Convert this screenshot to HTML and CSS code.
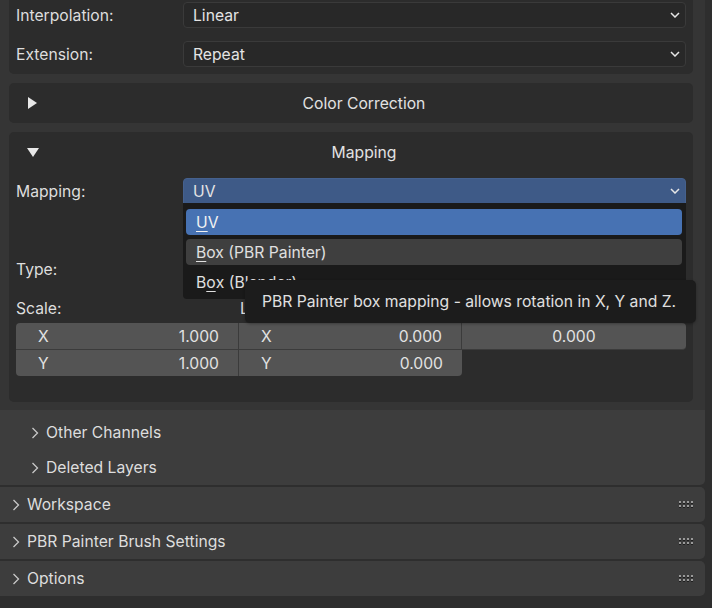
FILE: index.html
```html
<!DOCTYPE html>
<html>
<head>
<meta charset="utf-8">
<link rel="stylesheet" href="styles.css">
</head>
<body>
<div class="main">
  <div class="boxes">
    <section class="box box-top">
      <div class="prop">
        <span class="label">Interpolation:</span>
        <div class="select"><span>Linear</span><svg class="chev" width="10" height="6" viewBox="0 0 10 6"><polyline points="1,1 5,5 9,1" fill="none" stroke="#e6e6e6" stroke-width="1.5"/></svg></div>
      </div>
      <div class="prop">
        <span class="label">Extension:</span>
        <div class="select"><span>Repeat</span><svg class="chev" width="10" height="6" viewBox="0 0 10 6"><polyline points="1,1 5,5 9,1" fill="none" stroke="#e6e6e6" stroke-width="1.5"/></svg></div>
      </div>
    </section>

    <section class="box">
      <div class="box-head">
        <svg class="tri" width="12" height="12" viewBox="0 0 12 12"><polygon points="1,0 10,6 1,12" fill="#e8e8e8"/></svg>
        <span class="head-title">Color Correction</span>
      </div>
    </section>

    <section class="box mapping">
      <div class="box-head">
        <svg class="tri" width="12" height="12" viewBox="0 0 12 12"><polygon points="0,2 12,2 6,11" fill="#e8e8e8"/></svg>
        <span class="head-title">Mapping</span>
      </div>
      <div class="rows">
        <div class="prop">
          <span class="label">Mapping:</span>
          <div class="select active"><span>UV</span><svg class="chev" width="10" height="6" viewBox="0 0 10 6"><polyline points="1,1 5,5 9,1" fill="none" stroke="#e6e6e6" stroke-width="1.5"/></svg>
            <div class="menu">
              <div class="item selected"><u>U</u>V</div>
              <div class="item hover"><u>B</u>ox (PBR Painter)</div>
              <div class="item">B<u>o</u>x (Blender)</div>
            </div>
          </div>
        </div>
        <div class="prop"></div>
        <div class="prop">
          <span class="label">Type:</span>
        </div>
        <div class="prop vec-labels">
          <span>Scale:</span>
          <span class="loc">Location:</span>
          <span></span>
        </div>
      </div>
      <div class="vec-grid">
        <div class="num r1 c1"><span>X</span><span>1.000</span></div>
        <div class="num r1 c2"><span>X</span><span>0.000</span></div>
        <div class="num r1 c3 center"><span>0.000</span></div>
        <div class="num r2 c1"><span>Y</span><span>1.000</span></div>
        <div class="num r2 c2"><span>Y</span><span>0.000</span></div>
      </div>
      <div class="tooltip">PBR Painter box mapping - allows rotation in X, Y and Z.</div>
    </section>
  </div>

  <div class="subrows">
    <div class="subrow"><svg class="arrow" width="8" height="12" viewBox="0 0 8 12"><polyline points="1.5,1 6.5,6 1.5,11" fill="none" stroke="#c8c8c8" stroke-width="1.3"/></svg><span>Other Channels</span></div>
    <div class="subrow"><svg class="arrow" width="8" height="12" viewBox="0 0 8 12"><polyline points="1.5,1 6.5,6 1.5,11" fill="none" stroke="#c8c8c8" stroke-width="1.3"/></svg><span>Deleted Layers</span></div>
  </div>
</div>

<div class="panel">
  <svg class="arrow" width="8" height="12" viewBox="0 0 8 12"><polyline points="1.5,1 6.5,6 1.5,11" fill="none" stroke="#c8c8c8" stroke-width="1.3"/></svg>
  <span class="panel-title">Workspace</span>
  <svg class="grip" width="16" height="8" viewBox="0 0 16 8"><g><rect x="0" y="0" width="2" height="2" fill="#9a9a9a"/><rect x="0" y="2" width="2" height="1" fill="#1e1e1e"/><rect x="4" y="0" width="2" height="2" fill="#9a9a9a"/><rect x="4" y="2" width="2" height="1" fill="#1e1e1e"/><rect x="8" y="0" width="2" height="2" fill="#9a9a9a"/><rect x="8" y="2" width="2" height="1" fill="#1e1e1e"/><rect x="12" y="0" width="2" height="2" fill="#9a9a9a"/><rect x="12" y="2" width="2" height="1" fill="#1e1e1e"/><rect x="0" y="4" width="2" height="2" fill="#9a9a9a"/><rect x="0" y="6" width="2" height="1" fill="#1e1e1e"/><rect x="4" y="4" width="2" height="2" fill="#9a9a9a"/><rect x="4" y="6" width="2" height="1" fill="#1e1e1e"/><rect x="8" y="4" width="2" height="2" fill="#9a9a9a"/><rect x="8" y="6" width="2" height="1" fill="#1e1e1e"/><rect x="12" y="4" width="2" height="2" fill="#9a9a9a"/><rect x="12" y="6" width="2" height="1" fill="#1e1e1e"/></g></svg>
</div>
<div class="panel">
  <svg class="arrow" width="8" height="12" viewBox="0 0 8 12"><polyline points="1.5,1 6.5,6 1.5,11" fill="none" stroke="#c8c8c8" stroke-width="1.3"/></svg>
  <span class="panel-title">PBR Painter Brush Settings</span>
  <svg class="grip" width="16" height="8" viewBox="0 0 16 8"><g><rect x="0" y="0" width="2" height="2" fill="#9a9a9a"/><rect x="0" y="2" width="2" height="1" fill="#1e1e1e"/><rect x="4" y="0" width="2" height="2" fill="#9a9a9a"/><rect x="4" y="2" width="2" height="1" fill="#1e1e1e"/><rect x="8" y="0" width="2" height="2" fill="#9a9a9a"/><rect x="8" y="2" width="2" height="1" fill="#1e1e1e"/><rect x="12" y="0" width="2" height="2" fill="#9a9a9a"/><rect x="12" y="2" width="2" height="1" fill="#1e1e1e"/><rect x="0" y="4" width="2" height="2" fill="#9a9a9a"/><rect x="0" y="6" width="2" height="1" fill="#1e1e1e"/><rect x="4" y="4" width="2" height="2" fill="#9a9a9a"/><rect x="4" y="6" width="2" height="1" fill="#1e1e1e"/><rect x="8" y="4" width="2" height="2" fill="#9a9a9a"/><rect x="8" y="6" width="2" height="1" fill="#1e1e1e"/><rect x="12" y="4" width="2" height="2" fill="#9a9a9a"/><rect x="12" y="6" width="2" height="1" fill="#1e1e1e"/></g></svg>
</div>
<div class="panel">
  <svg class="arrow" width="8" height="12" viewBox="0 0 8 12"><polyline points="1.5,1 6.5,6 1.5,11" fill="none" stroke="#c8c8c8" stroke-width="1.3"/></svg>
  <span class="panel-title">Options</span>
  <svg class="grip" width="16" height="8" viewBox="0 0 16 8"><g><rect x="0" y="0" width="2" height="2" fill="#9a9a9a"/><rect x="0" y="2" width="2" height="1" fill="#1e1e1e"/><rect x="4" y="0" width="2" height="2" fill="#9a9a9a"/><rect x="4" y="2" width="2" height="1" fill="#1e1e1e"/><rect x="8" y="0" width="2" height="2" fill="#9a9a9a"/><rect x="8" y="2" width="2" height="1" fill="#1e1e1e"/><rect x="12" y="0" width="2" height="2" fill="#9a9a9a"/><rect x="12" y="2" width="2" height="1" fill="#1e1e1e"/><rect x="0" y="4" width="2" height="2" fill="#9a9a9a"/><rect x="0" y="6" width="2" height="1" fill="#1e1e1e"/><rect x="4" y="4" width="2" height="2" fill="#9a9a9a"/><rect x="4" y="6" width="2" height="1" fill="#1e1e1e"/><rect x="8" y="4" width="2" height="2" fill="#9a9a9a"/><rect x="8" y="6" width="2" height="1" fill="#1e1e1e"/><rect x="12" y="4" width="2" height="2" fill="#9a9a9a"/><rect x="12" y="6" width="2" height="1" fill="#1e1e1e"/></g></svg>
</div>
</body>
</html>
```
FILE: styles.css
```css
* { box-sizing: border-box; }
html, body { margin: 0; padding: 0; }
body {
  background: #2e2e2e;
  width: 712px;
  height: 608px;
  overflow: hidden;
  font-family: Inter, "Noto Sans", sans-serif;
  font-size: 15.7px;
  color: #dedede;
}
.main {
  width: 705px;
  background: #3d3d3d;
  border-radius: 0 0 5px 0;
}
.boxes {
  background: #353535;
  padding: 0 12px 8px 9px;
  display: flex;
  flex-direction: column;
  gap: 9px;
}
.box {
  background: #2c2c2c;
  border-radius: 5px;
  padding: 0 7px;
}
.box-top {
  border-radius: 0 0 5px 5px;
  padding-top: 2px;
  padding-bottom: 7px;
  display: flex;
  flex-direction: column;
  gap: 13px;
}
.prop {
  display: flex;
  align-items: center;
  height: 26px;
}
.label {
  width: 167px;
  flex: none;
}
.select {
  flex: 1;
  height: 26px;
  background: #282828;
  border: 1px solid #3a3a3a;
  border-radius: 4px;
  display: flex;
  align-items: center;
  justify-content: space-between;
  padding: 0 5px 0 9px;
  position: relative;
  color: #e4e4e4;
}
.select.active {
  background: #3e5a87;
  border-color: #45618e;
  border-radius: 4px 4px 0 0;
}
.chev { display: block; }
.box-head {
  display: flex;
  align-items: center;
  height: 40px;
  margin: 0 -7px;
  padding-left: 18px;
}
.tri { display: block; flex: none; }
.head-title {
  flex: 1;
  text-align: center;
  margin-right: 4px;
  color: #e2e2e2;
}
.mapping {
  position: relative;
  padding-bottom: 26px;
}
.rows {
  margin-top: 6px;
  display: flex;
  flex-direction: column;
  gap: 13px;
}
.vec-labels {
  display: grid;
  grid-template-columns: 224px 223px 223px;
}
.menu {
  position: absolute;
  top: 100%;
  left: -1px;
  right: -1px;
  height: 96px;
  background: #1a1a1a;
  border-radius: 0 0 4px 4px;
  padding: 6px 4px 4px 3px;
  display: flex;
  flex-direction: column;
  gap: 4px;
  z-index: 2;
}
.item {
  height: 26px;
  border-radius: 4px;
  padding-left: 10px;
  display: flex;
  align-items: center;
  color: #e0e0e0;
}
.item.selected { background: #4772b3; color: #f2f2f2; }
.item.hover { background: #3f3f3f; }
u {
  text-decoration: underline;
  text-underline-offset: 3px;
  text-decoration-thickness: 1px;
}
.vec-grid {
  margin-top: 2px;
  display: grid;
  grid-template-columns: 223px 223px 224px;
  grid-template-rows: 27px 26px;
}
.num {
  background: #545454;
  display: flex;
  align-items: center;
  justify-content: space-between;
  padding: 0 19px 0 22px;
  color: #e2e2e2;
}
.num.center { justify-content: center; padding: 0; }
.r1 { border-bottom: 1px solid #3b3b3b; }
.c1, .c2 { border-right: 1px solid #3b3b3b; }
.r1.c1 { border-top-left-radius: 4px; }
.r1.c3 { border-radius: 0 4px 4px 0; }
.r2.c1 { border-bottom-left-radius: 4px; }
.r2.c2 { border-bottom-right-radius: 4px; border-right: none; }
.tooltip {
  position: absolute;
  left: 236px;
  top: 148px;
  width: 451px;
  height: 43px;
  background: #1c1c1c;
  border-radius: 5px;
  padding-left: 17px;
  display: flex;
  align-items: center;
  color: #e0e0e0;
  z-index: 3;
  box-shadow: 0 1px 3px rgba(0,0,0,0.3);
}
.subrows {
  padding-top: 5px;
}
.subrow {
  height: 35px;
  display: flex;
  align-items: center;
  padding-left: 31px;
  gap: 7px;
}
.arrow { display: block; flex: none; }
.panel {
  margin-top: 2px;
  width: 705px;
  height: 35px;
  background: #3d3d3d;
  border-radius: 0 5px 5px 0;
  display: flex;
  align-items: center;
  padding: 0 10px 0 12px;
  gap: 7px;
}
.panel-title { flex: 1; }
.grip { display: block; flex: none; }
```
